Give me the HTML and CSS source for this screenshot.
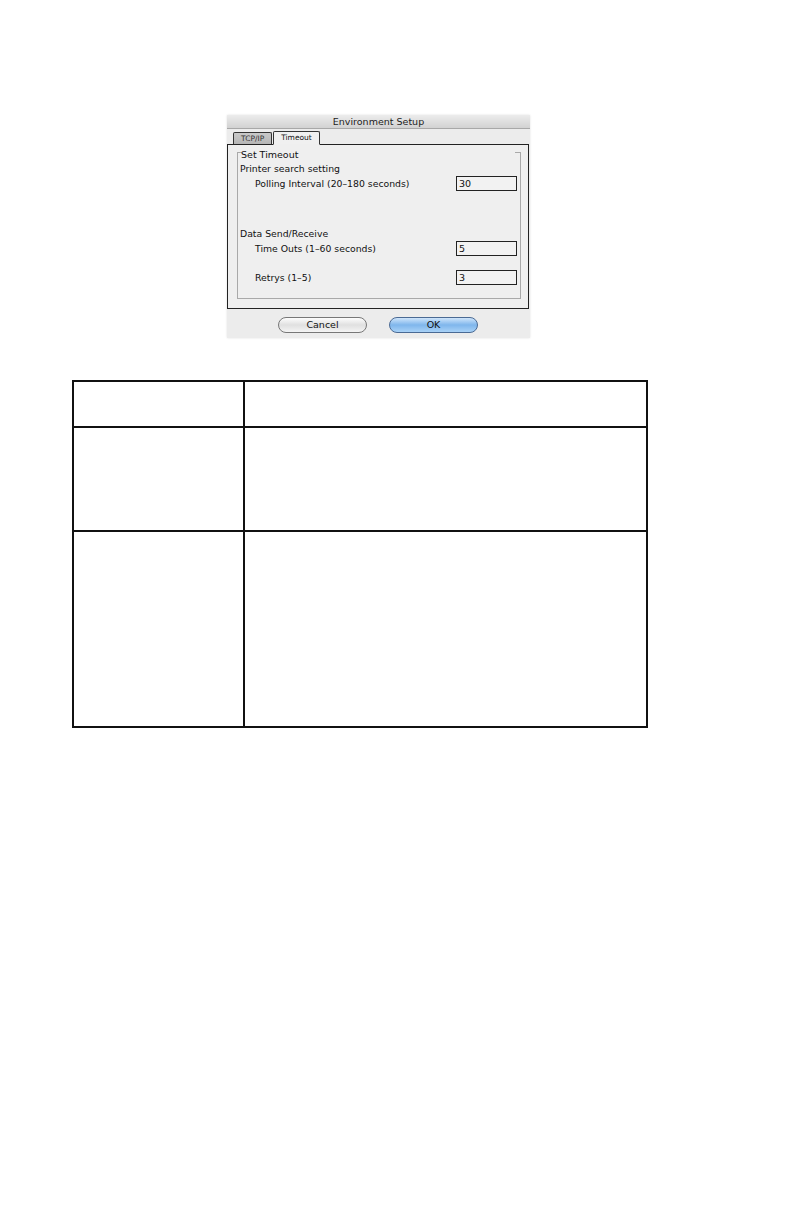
FILE: index.html
```html
<!DOCTYPE html>
<html>
<head>
<meta charset="utf-8">
<link rel="stylesheet" href="styles.css">
</head>
<body>
<div class="page">
  <div class="dialog">
    <div class="titlebar">Environment Setup</div>
    <div class="tabs">
      <div class="tab">TCP/IP</div>
      <div class="tab active">Timeout</div>
    </div>
    <div class="panel">
      <div class="group">
        <div class="legend">Set Timeout</div>
        <div class="section">Printer search setting</div>
        <div class="row first"><span class="label">Polling Interval (20–180 seconds)</span><span class="field focus">30</span></div>
        <div class="section second">Data Send/Receive</div>
        <div class="row"><span class="label">Time Outs (1–60 seconds)</span><span class="field">5</span></div>
        <div class="row third"><span class="label">Retrys (1–5)</span><span class="field">3</span></div>
      </div>
    </div>
    <div class="buttons">
      <div class="btn">Cancel</div>
      <div class="btn ok">OK</div>
    </div>
  </div>

  <table class="grid">
    <tr class="r1"><td class="c1"></td><td></td></tr>
    <tr class="r2"><td class="c1"></td><td></td></tr>
    <tr class="r3"><td class="c1"></td><td></td></tr>
  </table>
</div>
</body>
</html>
```

FILE: styles.css
```css
html, body {
  margin: 0;
  padding: 0;
  background: #fff;
}
.page {
  width: 792px;
  height: 1224px;
  padding-top: 115px;
  box-sizing: border-box;
  font-family: "DejaVu Sans", Verdana, sans-serif;
}
.dialog {
  margin-left: 227px;
  width: 303px;
  height: 223px;
  background: #ececec;
  display: flex;
  flex-direction: column;
  box-shadow: 0 0 2px rgba(0,0,0,0.12);
}
.titlebar {
  height: 13px;
  line-height: 13px;
  text-align: center;
  font-size: 9.5px;
  color: #222;
  background: linear-gradient(#ececec, #d2d2d2);
  border-bottom: 1px solid #a8a8a8;
}
.tabs {
  display: flex;
  padding-left: 6px;
  margin-top: 2px;
  height: 13px;
  align-items: flex-end;
}
.tab {
  font-size: 7.5px;
  color: #333;
  height: 11px;
  line-height: 11px;
  padding: 0 7px;
  border: 1px solid #333;
  border-bottom: none;
  border-radius: 2px 2px 0 0;
  background: linear-gradient(#c9c9c9, #b5b5b5);
  margin-right: 1px;
}
.tab.active {
  background: #f0f0f0;
  height: 12px;
  color: #111;
  padding: 0 7px;
  position: relative;
  z-index: 1;
  margin-bottom: -1px;
  border-bottom: 1px solid #efefef;
}
.panel {
  width: 302px;
  height: 165px;
  border: 1px solid #222;
  background: #efefef;
  padding: 7px 7px 0 9px;
  box-sizing: border-box;
}
.group {
  border: 1px solid #a9a9a9;
  border-top: none;
  height: 147px;
  box-sizing: border-box;
  padding: 1px 3px 0 2px;
  font-size: 9.3px;
  color: #111;
  background:
    linear-gradient(to right, #a9a9a9 4px, transparent 4px, transparent calc(100% - 5px), #a9a9a9 calc(100% - 5px)) top left / 100% 1px no-repeat;
}
.legend {
  line-height: 12px;
  height: 12px;
  margin-top: -4px;
  padding-left: 1px;
  font-size: 9.5px;
}
.section {
  margin-top: 2px;
  line-height: 12px;
  height: 12px;
}
.section.second {
  margin-top: 37px;
}
.row {
  display: flex;
  align-items: center;
  justify-content: space-between;
  padding-left: 15px;
  height: 15px;
  margin-top: 1px;
}
.row.third {
  margin-top: 14px;
}
.field {
  width: 57px;
  height: 13px;
  border: 1px solid #222;
  background: #f2f2f2;
  font-size: 9.5px;
  line-height: 13px;
  padding-left: 2px;
  box-sizing: content-box;
}
.buttons {
  display: flex;
  padding-left: 51px;
  margin-top: 8px;
  gap: 22px;
}
.btn {
  width: 87px;
  height: 14px;
  line-height: 14px;
  border: 1px solid #777;
  border-radius: 8px;
  text-align: center;
  font-size: 9.5px;
  color: #111;
  background: linear-gradient(#fdfdfd, #e0e0e0 50%, #f4f4f4);
}
.btn.ok {
  border-color: #4a6a94;
  background: linear-gradient(#cfe5fb, #7fb6ec 50%, #a9d2f7);
}
.grid {
  border-collapse: collapse;
  margin: 42px 0 0 72px;
  width: 576px;
}
.grid td {
  border: 2px solid #111;
  padding: 0;
}
.grid .c1 {
  width: 169px;
}
.grid .r1 td { height: 44px; }
.grid .r2 td { height: 102px; }
.grid .r3 td { height: 194px; }
```
